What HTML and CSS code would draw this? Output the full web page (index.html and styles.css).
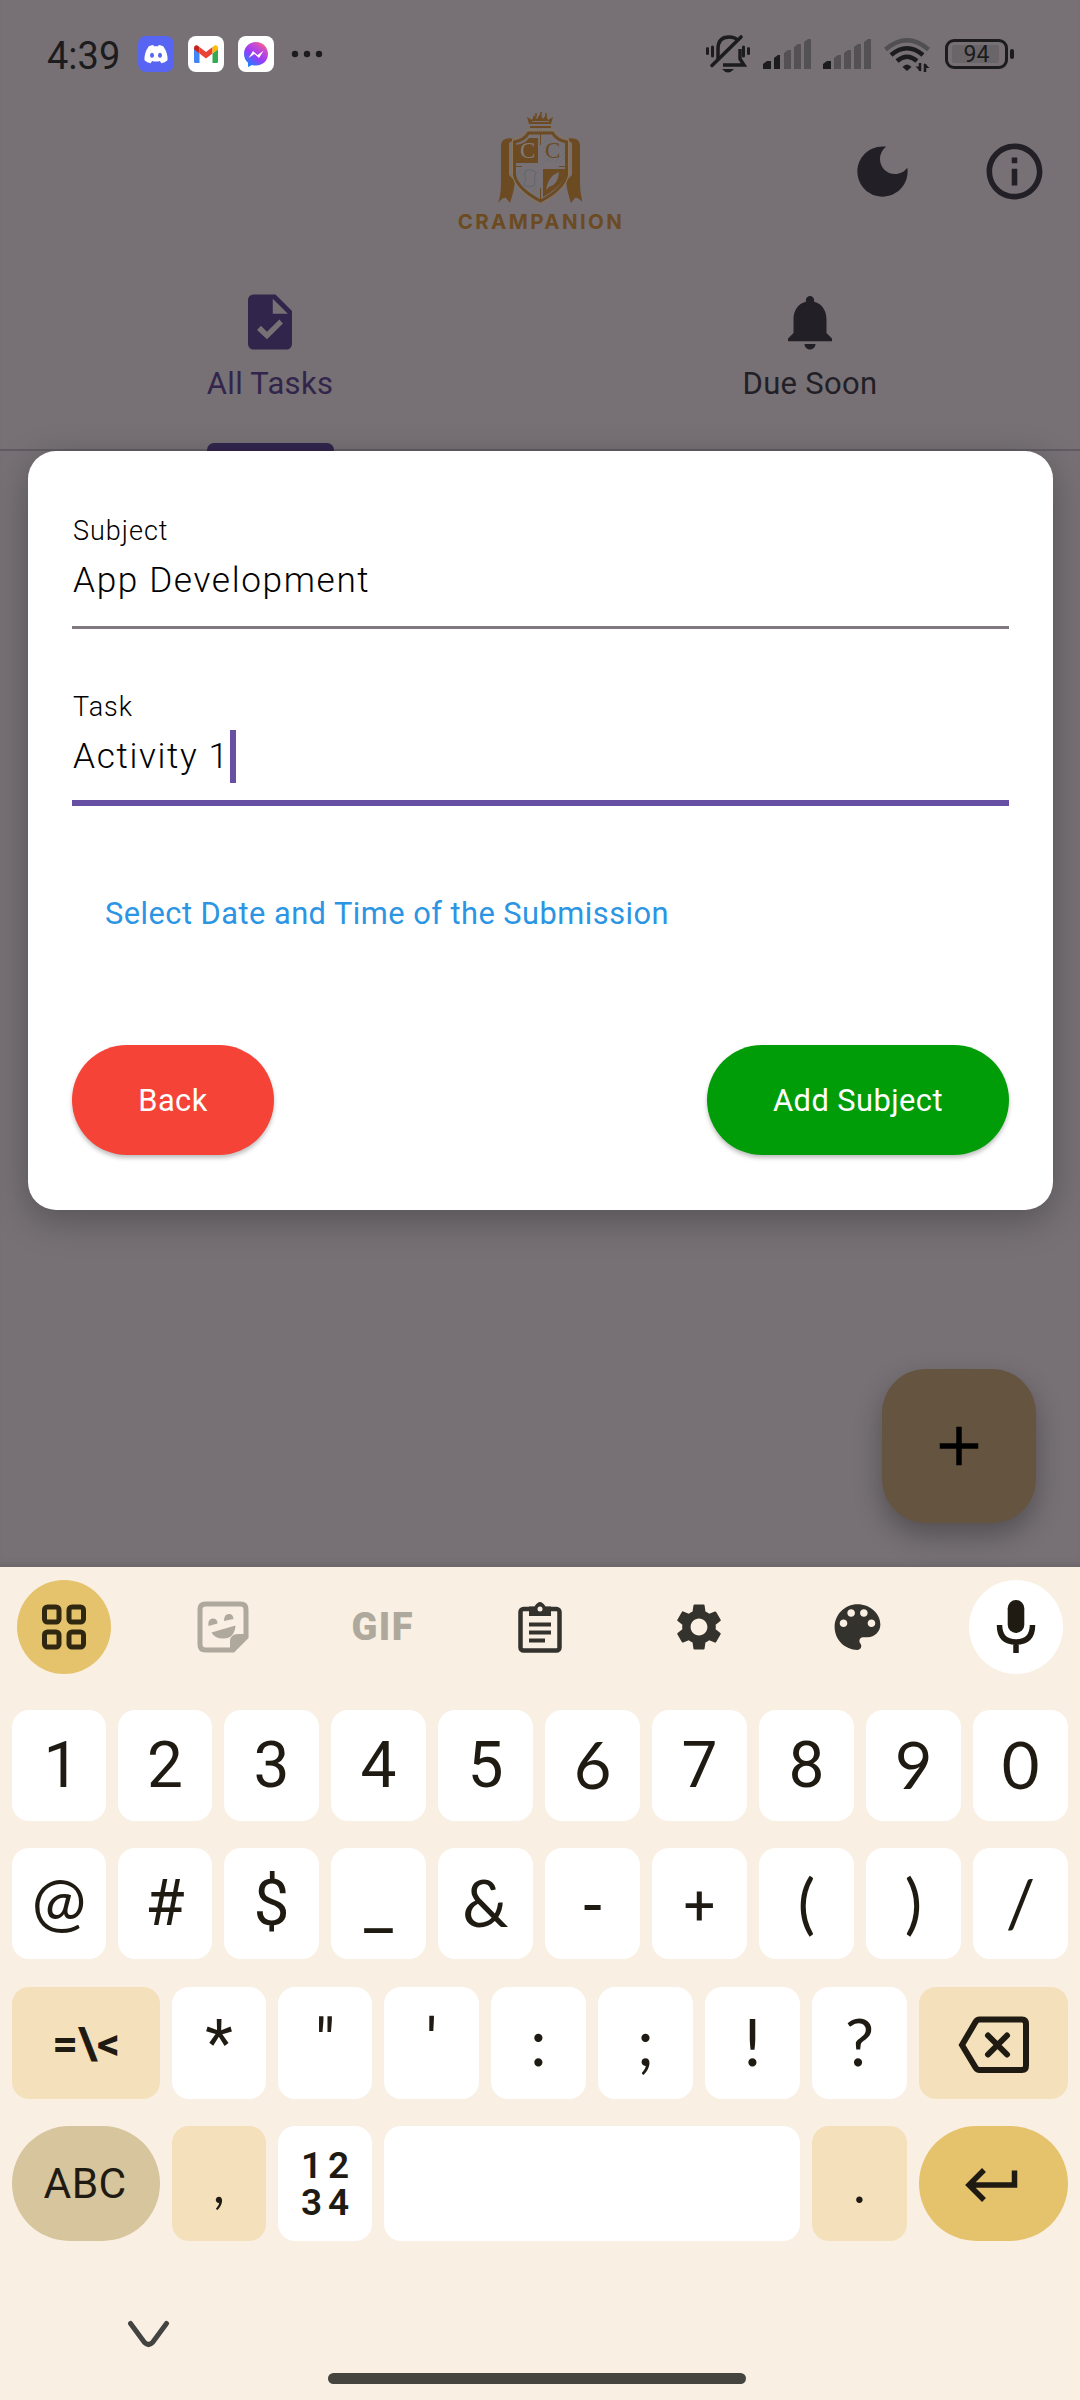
FILE: index.html
```html
<!DOCTYPE html>
<html lang="en">
<head>
<meta charset="utf-8">
<title>Crampanion</title>
<link rel="stylesheet" href="styles.css">
</head>
<body>
<main class="app">
  <div class="status">
    <span class="clock">4:39</span>
    <svg class="app-icon" width="36" height="36" viewBox="0 0 36 36"><rect width="36" height="36" rx="8" fill="#5865f2"/><path d="M10.800 10.300Q13 9.200 15.200 9l.8 1.300q2 -.3 4 0L20.800 9q2.300 .2 4.400 1.300Q30 17 29.500 24.200 27 26.500 23.300 27.300l-1.300-2.300q-4 1-8 0l-1.300 2.300Q9 26.500 6.500 24.200 6 17 10.800 10.300z" fill="#fff"/><ellipse cx="14" cy="19.300" rx="2" ry="2.500" fill="#5865f2"/><ellipse cx="22" cy="19.300" rx="2" ry="2.500" fill="#5865f2"/></svg>
    <svg class="app-icon" width="36" height="36" viewBox="0 0 36 36"><rect width="36" height="36" rx="8" fill="#fff"/><path d="M6 13l5.500 4.500V27H7.500Q6 27 6 25.500z" fill="#4285f4"/><path d="M30 13l-5.500 4.500V27h4Q30 27 30 25.500z" fill="#34a853"/><path d="M11.500 11l6.500 5 6.500-5v6.500L18 22.500l-6.500-5z" fill="#ea4335"/><path d="M6 12.500Q6 9 9 9.200l2.500 1.800v6.500L6 13.500z" fill="#c5221f"/><path d="M30 12.500Q30 9 27 9.200l-2.500 1.800v6.500l5.500-4z" fill="#fbbc04"/></svg>
    <svg class="app-icon" width="36" height="36" viewBox="0 0 36 36"><defs><linearGradient id="msg" x1="0.150" y1="1" x2="0.850" y2="0"><stop offset="0" stop-color="#0a8dff"/><stop offset=".45" stop-color="#9a3bf8"/><stop offset=".75" stop-color="#c94bd0"/><stop offset="1" stop-color="#ff6a68"/></linearGradient></defs><rect width="36" height="36" rx="8" fill="#fff"/><path d="M18 6C11 6 6 11.200 6 18c0 3.600 1.500 6.700 4 8.700V31l4-2c1.300.4 2.600.5 4 .5 7 0 12-5 12-11.500S25 6 18 6z" fill="url(#msg)"/><path d="M10.500 22l4.500-7 4.500 4 6-4.300-4.500 7.300-4.500-4z" fill="#fff"/></svg>
    <svg class="dots" width="32" height="8" viewBox="0 0 32 8"><circle cx="4" cy="4" r="3.200"/><circle cx="16" cy="4" r="3.200"/><circle cx="28" cy="4" r="3.200"/></svg>
    <span class="grow"></span>
    <svg width="46" height="40" viewBox="704 35 46 40" fill="none" stroke="#1c1b1d" stroke-width="3.400"><path d="M717 61V50q0-12 11-12 6 0 8 3"/><path d="M739 50v10l4 6H722"/><path d="M711 66.500L740 38" stroke-width="3.600" stroke-linecap="round"/><path d="M711.500 48v9M706.500 49.500v5M742.500 48v9M747.500 49.500v5" stroke-width="3" stroke-linecap="round"/><path d="M721 70h12q-6 7-12 0z" fill="#1c1b1d" stroke="none"/></svg>
    <svg class="sig" width="48" height="32" viewBox="763 39 48 32"><path d="M763 70v-5l4-3h4v8z"/><path d="M774 70V59l4-3h2v14z"/><path class="off" d="M784 70V54l4-3h3v19zM794 70V48l4-3h3v25zM804 70V43l4-3h3v30z"/></svg>
    <svg class="sig" width="48" height="32" viewBox="763 39 48 32"><path d="M763 70v-5l4-3h4v8z"/><path class="off" d="M774 70V59l4-3h3v14zM784 70V54l4-3h3v19zM794 70V48l4-3h3v25zM804 70V43l4-3h3v30z"/></svg>
    <svg class="wifi" width="48" height="36" viewBox="883 36 48 36" fill="none" stroke-width="4.500" stroke="#1c1b1d"><path d="M885.500 49.500q21.500-18.500 43 0" stroke="#514f52"/><path d="M891 55q16-13.500 32 0"/><path d="M897 61q10-8.500 20 0"/><path d="M902.500 67q4.500-5 9 0l-4.500 4z" fill="#1c1b1d" stroke="none"/><path d="M920 63v8M925 72v-8" stroke-width="2.500"/><path d="M915.500 66.500h5v5zM929.500 68h-5v-5z" fill="#1c1b1d" stroke="none"/></svg>
    <span class="battery"><span class="charge">94</span></span>
  </div>

  <header class="topbar">
    <div class="brand">
      <svg width="84" height="94" viewBox="498 112 84 94" fill="none" stroke="#6c4b22">
        <path d="M529 124l-2-7 5 3 2-5 3 4 3-5 3 5 3-4 2 5 5-3-2 7z" fill="#6c4b22" stroke="none"/><path d="M532 121.500h17" stroke="#777175"/><path d="M530 127h21" stroke-width="2"/><path d="M536 117v-4M541 116v-4M546 117v-4" stroke-width="1.500"/>
        <path d="M515 139q-13-3-14 6v38q0 12-3 20 5-6 8-5 2 2 4 5 4-12 5-22l-6-6v-32zM566 139q13-3 14 6v38q0 12 3 20-5-6-8-5-2 2-4 5-4-12-5-22l6-6v-32z" fill="#6c4b22" stroke="none"/>
        <path d="M540.500 130h14q3 7 14 9v36q-2 16-28 29-26-13-28-29v-36q11-2 14-9z" fill="#777175" stroke="#8a7455" stroke-width="1"/>
        <path d="M540.500 133h12q4 7 14 9v33q-3 14-26 26-23-12-26-26v-33q10-2 14-9z" stroke-width="3"/>
        <path d="M529 138h9v25h-23v-18q10-1 14-7zM543 169h22v7q-3 10-22 21z" fill="#6c4b22" stroke="none"/>
        <path d="M540.500 133v12M540.500 188v12M513 166.500h9M559 166.500h9" stroke-width="1"/>
        <path d="M543 144l5-5M543 149l9-9M543 154l12-12M543 159l15-15M545 162l17-17M550 162l15-15M555 162l10-10M560 162l5-5M516 175l6-6M517 180l11-11M520 183l14-14M525 185l13-13M529 188l9-9M532 192l6-6" stroke="#686e72" stroke-width="1"/>
        <path d="M526 170q-3 5 0 9l-2 6q4 3 11 0-2-7 1-13-5-3-10-2z" stroke="#5d6870" fill="#777175"/>
        <path d="M546 190q2-14 13-18-1 13-10 15z" fill="#777175" stroke="none"/>
        <g stroke="none" class="crest"><text x="520" y="158" fill="#827a78">C</text><text x="545" y="158" fill="#6c4b22">C</text></g>
      </svg>
      <span class="brand-name">CRAMPANION</span>
    </div>
    <div class="actions">
      <svg width="67" height="67" viewBox="0 0 24 24"><path d="M12 3c-4.970 0-9 4.030-9 9s4.030 9 9 9 9-4.030 9-9c0-.46-.04-.92-.1-1.360-.98 1.370-2.580 2.260-4.400 2.260-2.980 0-5.400-2.420-5.400-5.400 0-1.810.89-3.420 2.260-4.400C12.920 3.040 12.460 3 12 3z"/></svg>
      <svg width="67" height="67" viewBox="0 0 24 24"><path d="M11 7h2v2h-2zm0 4h2v6h-2zm1-9C6.480 2 2 6.480 2 12s4.480 10 10 10 10-4.480 10-10S17.520 2 12 2zm0 18c-4.410 0-8-3.590-8-8s3.590-8 8-8 8 3.590 8 8-3.590 8-8 8z"/></svg>
    </div>
  </header>

  <nav class="tabs">
    <div class="tab active">
      <svg width="66" height="66" viewBox="0 0 24 24" fill-rule="evenodd"><path d="M6 2h8l6 6v12a2 2 0 0 1-2 2H6a2 2 0 0 1-2-2V4a2 2 0 0 1 2-2zM13 3.500V9h5.500zM7.300 14.900L10.900 18.300 16.700 12.500 15.400 11.100 10.900 15.500 8.700 13.400z"/></svg>
      <span class="tab-label">All Tasks</span>
      <span class="indicator"></span>
    </div>
    <div class="tab">
      <svg width="66" height="66" viewBox="0 0 24 24"><path d="M12 22c1.100 0 2-.9 2-2h-4c0 1.100.89 2 2 2zm6-6v-5c0-3.070-1.640-5.640-4.500-6.320V4c0-.83-.67-1.500-1.500-1.500s-1.500.67-1.500 1.500v.68C7.630 5.360 6 7.920 6 11v5l-2 2v1h16v-1l-2-2z"/></svg>
      <span class="tab-label">Due Soon</span>
    </div>
  </nav>

  <section class="dialog">
    <label class="field"><span class="field-label">Subject</span><span class="field-value"><span>App Development</span></span></label>
    <label class="field focused"><span class="field-label">Task</span><span class="field-value"><span>Activity 1</span><i class="caret"></i></span></label>
    <a class="date-link">Select Date and Time of the Submission</a>
    <div class="buttons"><button class="btn back">Back</button><button class="btn add">Add Subject</button></div>
  </section>

  <div class="fab"><svg width="66" height="66" viewBox="0 0 24 24"><path d="M19 13h-6v6h-2v-6H5v-2h6V5h2v6h6z"/></svg></div>
</main>

<section class="keyboard">
  <div class="tools">
    <span class="tool round gold"><svg width="48" height="48" viewBox="0 0 48 48" fill="none" stroke="#302711" stroke-width="5"><rect x="4.500" y="4" width="14.500" height="15" rx="3"/><rect x="29" y="4" width="14.500" height="15" rx="3"/><rect x="4.500" y="29" width="14.500" height="15" rx="3"/><rect x="29" y="29" width="14.500" height="15" rx="3"/></svg></span>
    <span class="tool"><svg width="52" height="52" viewBox="0 0 52 52" fill="none" stroke="#afa89c" stroke-width="5"><path d="M36 49H8.500Q3 49 3 43.500V8.500Q3 3 8.500 3h35Q49 3 49 8.500V36z"/><path d="M34 49V41q0-7 7-7h8L35 49z" fill="#afa89c" stroke-width="2"/><path d="M14.500 31.500l24-7q-1 13-12 13-9 0-12-6zM11.500 25q-1-7 4-7.500 5 0 5 5zM27 20q0-7 5-7 4 0 4.500 5z" fill="#afa89c" stroke="none"/></svg></span>
    <span class="tool gif">GIF</span>
    <span class="tool"><svg width="46" height="52" viewBox="0 0 46 52" fill="none" stroke="#34322d" stroke-width="4.500"><rect x="3.500" y="8" width="39" height="41.500" rx="3"/><path d="M12 5.500h5.500q5.500-9 11 0H34V15H12z" fill="#34322d" stroke="none"/><circle cx="23" cy="8" r="2.500" fill="#f9efe2" stroke="none"/><path d="M12 23.500h22M12 31.500h22M12 39.500h16" stroke-width="4"/></svg></span>
    <span class="tool"><svg width="56" height="56" viewBox="0 0 24 24" fill="#34322d"><path d="M19.140 12.940c.04-.3.060-.61.060-.94 0-.32-.02-.64-.07-.94l2.030-1.580c.18-.14.23-.41.120-.61l-1.920-3.320c-.12-.22-.37-.29-.59-.22l-2.390.96c-.5-.38-1.030-.7-1.620-.94l-.36-2.540c-.04-.24-.24-.41-.48-.41h-3.840c-.24 0-.43.17-.47.410l-.36 2.540c-.59.240-1.130.570-1.620.940l-2.390-.96c-.22-.08-.47 0-.59.220L2.740 8.870c-.12.210-.08.470.120.610l2.030 1.580c-.05.300-.09.630-.09.940s.02.640.070.940l-2.030 1.580c-.18.140-.23.410-.12.610l1.920 3.320c.12.220.37.290.59.220l2.390-.96c.5.380 1.030.7 1.620.94l.36 2.540c.05.240.24.410.48.410h3.840c.24 0 .44-.17.470-.41l.36-2.540c.59-.24 1.130-.56 1.620-.94l2.390.96c.22.080.47 0 .59-.22l1.920-3.320c.12-.22.070-.47-.12-.61l-2.010-1.580zM12 15.600c-1.980 0-3.600-1.620-3.600-3.600s1.620-3.600 3.600-3.600 3.600 1.620 3.600 3.600-1.620 3.600-3.600 3.600z"/></svg></span>
    <span class="tool"><svg width="61" height="62" viewBox="0 0 24 24" fill="#34322d"><path d="M12 3c-4.970 0-9 4.030-9 9s4.030 9 9 9c.83 0 1.500-.67 1.500-1.500 0-.39-.15-.74-.39-1.010-.23-.26-.38-.61-.38-.99 0-.83.670-1.500 1.500-1.500H16c2.760 0 5-2.240 5-5 0-4.420-4.030-8-9-8zm-5.500 9c-.83 0-1.500-.67-1.500-1.500S5.670 9 6.500 9 8 9.670 8 10.500 7.330 12 6.500 12zm3-4C8.670 8 8 7.330 8 6.500S8.670 5 9.500 5s1.500.67 1.500 1.500S10.330 8 9.500 8zm5 0c-.83 0-1.500-.67-1.500-1.500S13.670 5 14.500 5s1.500.67 1.500 1.500S15.330 8 14.500 8zm3 4c-.83 0-1.500-.67-1.500-1.500S16.670 9 17.500 9s1.500.67 1.500 1.500-.67 1.500-1.500 1.500z"/></svg></span>
    <span class="tool round white"><svg width="40" height="56" viewBox="0 0 40 56" fill="none" stroke="#1f1b12" stroke-width="5.500"><rect x="11.700" y="1" width="16.600" height="33" rx="8.300" fill="#1f1b12" stroke="none"/><path d="M3.500 26q0 17 16.500 17t16.500-17M20 42v12"/></svg></span>
  </div>

  <div class="keys">
    <span class="key one">1</span><span class="key">2</span><span class="key">3</span><span class="key">4</span><span class="key">5</span><span class="key lato">6</span><span class="key">7</span><span class="key">8</span><span class="key lato">9</span><span class="key lato">0</span>
    <span class="key lato at">@</span><span class="key">#</span><span class="key">$</span><span class="key under">_</span><span class="key lato">&amp;</span><span class="key lato">-</span><span class="key plus">+</span><span class="key lato">(</span><span class="key lato">)</span><span class="key lato">/</span>
  </div>
  <div class="keys wide">
    <span class="key tan code">=\&lt;</span><span class="key">*</span><span class="key">"</span><span class="key">'</span><span class="key lato">:</span><span class="key lato">;</span><span class="key lato">!</span><span class="key lato">?</span>
    <span class="key tan erase"><svg width="72" height="60" viewBox="0 0 72 60" fill="none" stroke="#1f1b12" stroke-width="6"><path d="M21.500 4.500H64Q68 4.500 68 9v41.500Q68 55 64 55H21.500Q19 55 17.500 52.500L4 30 17.500 7Q19 4.500 21.500 4.500z"/><path d="M30 20.500l19 19M49 20.500l-19 19" stroke-linecap="round"/></svg></span>
  </div>
  <div class="keys wide last">
    <span class="key pill abc">ABC</span><span class="key tan small lato">,</span>
    <span class="key numpad"><b>1</b><b>2</b><b>3</b><b>4</b></span>
    <span class="key space"></span><span class="key tan small lato">.</span>
    <span class="key pill enter"><svg width="54" height="34" viewBox="0 0 54 34" fill="none" stroke="#1f1b12" stroke-width="5.500"><path d="M50.500 2.500V17H5M20 2L5 17l15 15"/></svg></span>
  </div>

  <div class="navbar">
    <svg width="43" height="28" viewBox="0 0 43 28" fill="none" stroke="#434341" stroke-width="5" stroke-linecap="round" stroke-linejoin="round"><path d="M3.500 3.500L17.500 22.500Q21.500 26.500 25.500 22.500L39.500 3.500"/></svg>
    <span class="home"></span>
  </div>
</section>
</body>
</html>
```
FILE: styles.css
```css
* { box-sizing: border-box; }
body {
  margin: 0;
  width: 1080px;
  height: 2400px;
  display: flex;
  flex-direction: column;
  overflow: hidden;
  font-family: Roboto, sans-serif;
}
svg { display: block; flex: none; }

.app {
  position: relative;
  height: 1567px;
  background: #777175;
  box-shadow: inset 0 -8px 8px -6px rgba(0, 0, 0, .12);
}

/* status bar */
.status {
  height: 108px;
  padding: 0 64px 0 47px;
  display: flex;
  align-items: center;
  color: #1c1b1d;
}
.clock { width: 91px; font-size: 38px; font-weight: 450; line-height: 44px; padding-top: 3px; }
.app-icon { margin-right: 14px; }
.dots { margin-left: 3px; fill: #1c1b1d; }
.grow { flex: 1; }
.sig { margin-left: 12px; fill: #1c1b1d; }
.sig .off { fill: #535154; }
.wifi { margin-left: 12px; }
.battery {
  position: relative;
  width: 63px;
  height: 30px;
  margin: 0 8px 0 14px;
  padding: 3px;
  border: 3px solid #1c1b1d;
  border-radius: 9px;
}
.battery::after {
  content: "";
  position: absolute;
  right: -9px;
  top: 7px;
  width: 4px;
  height: 10px;
  border-radius: 2px;
  background: #1c1b1d;
}
.charge {
  display: block;
  width: 47px;
  height: 18px;
  margin-left: 1px;
  padding-left: 2px;
  background: #6a6569;
  border-radius: 2px;
  font-size: 23px;
  line-height: 20px;
  text-align: center;
}

/* header */
.topbar {
  height: 126px;
  display: grid;
  grid-template-columns: 1fr auto 1fr;
  align-items: center;
}
.brand {
  grid-column: 2;
  display: flex;
  flex-direction: column;
  align-items: center;
  padding-top: 4px;
}
.brand-name {
  margin-top: 4px;
  font: 750 20.500px/24px Inter, sans-serif;
  letter-spacing: 2.400px;
  margin-right: -2px;
  color: #6c4b22;
}
.crest { font: 23px "Liberation Serif", serif; }
.actions {
  display: flex;
  justify-content: flex-end;
  gap: 65px;
  padding-right: 32px;
  fill: #222026;
}

/* tabs */
.tabs {
  height: 217px;
  display: grid;
  grid-template-columns: 1fr 1fr;
  border-bottom: 2px solid #615c61;
}
.tab {
  display: flex;
  flex-direction: column;
  align-items: center;
  padding-top: 55px;
  color: #222026;
  fill: #222026;
}
.tab.active { color: #31254c; fill: #31254c; }
.tab-label {
  margin-top: 11px;
  font-size: 31px;
  line-height: 36px;
  letter-spacing: .3px;
}
.indicator {
  width: 127px;
  height: 8px;
  margin-top: 41px;
  background: #31254c;
  border-radius: 7px 7px 0 0;
}

/* dialog */
.dialog {
  position: absolute;
  left: 28px;
  top: 451px;
  width: 1025px;
  height: 759px;
  padding: 62px 44px 55px;
  display: flex;
  flex-direction: column;
  background: #fff;
  border-radius: 28px;
  box-shadow: 0 10px 36px rgba(0, 0, 0, .28);
}
.field {
  display: flex;
  flex-direction: column;
  height: 116px;
  margin-bottom: 60px;
  border-bottom: 3px solid #807980;
  padding: 1px 0 0 1px;
  font-weight: 300;
  color: #000;
}
.field-label { font-size: 27px; line-height: 34px; letter-spacing: 1px; }
.field-value {
  display: flex;
  align-items: center;
  height: 52px;
  margin-top: 6px;
  font-size: 35.200px;
  letter-spacing: 1.640px;
}
.field.focused { height: 117px; margin-bottom: 63px; border-bottom: 6px solid #6750a4; }
.caret { width: 6px; height: 53px; background: #6750a4; }
.date-link {
  margin: 27px 0 0 33px;
  font-size: 30.800px;
  line-height: 36px;
  font-weight: 450;
  letter-spacing: .47px;
  color: #2b95e3;
}
.buttons { display: flex; justify-content: space-between; margin-top: auto; }
.btn {
  height: 110px;
  border: 0;
  padding: 1px 0 0;
  border-radius: 55px;
  font: 450 30.800px/36px Roboto, sans-serif;
  letter-spacing: .45px;
  color: #fff;
  box-shadow: 0 3px 4px rgba(0, 0, 0, .25);
}
.back { width: 202px; background: #f54337; }
.add { width: 302px; background: #019d09; }

.fab {
  position: absolute;
  right: 44px;
  bottom: 44px;
  width: 154px;
  height: 154px;
  display: grid;
  place-items: center;
  background: #655440;
  border-radius: 44px;
  box-shadow: 0 12px 28px rgba(0, 0, 0, .3);
}

/* keyboard */
.keyboard {
  height: 833px;
  padding: 13px 12px 0;
  background: #f9efe2;
  color: #1f1b12;
}
.tools {
  height: 94px;
  margin: 0 7px 36px 5px;
  display: flex;
  align-items: center;
  justify-content: space-between;
}
.tool { width: 94px; height: 94px; display: grid; place-items: center; }
.round { border-radius: 50%; }
.gold { background: #e5c26c; }
.white { background: #fff; margin-right: -2px; }
.gif { padding-left: 3px; font-size: 38px; font-weight: 900; letter-spacing: 1.500px; color: #afa89c; }

.keys {
  display: grid;
  grid-template-columns: 94px 94px repeat(8, 95px);
  gap: 27px 12px;
  grid-auto-rows: 111px;
}
.wide {
  grid-template-columns: 148px 94px 94px repeat(5, 95px) 149px;
  grid-auto-rows: 112px;
  margin-top: 28px;
}
.last { grid-auto-rows: 115px; margin-top: 27px; }
.key {
  display: flex;
  align-items: center;
  justify-content: center;
  background: #fff;
  border-radius: 17px;
  font-size: 64px;
}
.lato { font-family: Lato, sans-serif; font-size: 65px; padding-bottom: 4px; }
.one { padding-left: 5px; }
.at { padding-bottom: 8px; }
.under { padding-top: 5px; }
.plus { padding-top: 5px; font-size: 56px; }
.tan { background: #f4e0bb; }
.erase { padding-top: 4px; }
.pill { border-radius: 58px; }
.abc { background: #d6c59d; font-size: 42.500px; letter-spacing: .3px; padding-right: 2px; }
.enter { background: #e5c26c; padding: 3px 5px 0 0; }
.code { font-size: 45px; font-weight: 700; }
.small { font-size: 52px; padding-bottom: 2px; }
.space { grid-column: span 4; }
.numpad {
  display: grid;
  grid-template-columns: 22px 22px;
  grid-auto-rows: 37px;
  gap: 0 5px;
  place-content: center;
  text-align: center;
  font-size: 37px;
  line-height: 37px;
}
.numpad b { font-weight: 600; }

.navbar { padding: 79px 0 0 115px; }
.home {
  display: block;
  width: 418px;
  height: 11px;
  margin: 25px 0 0 201px;
  border-radius: 6px;
  background: #46443e;
}
```
